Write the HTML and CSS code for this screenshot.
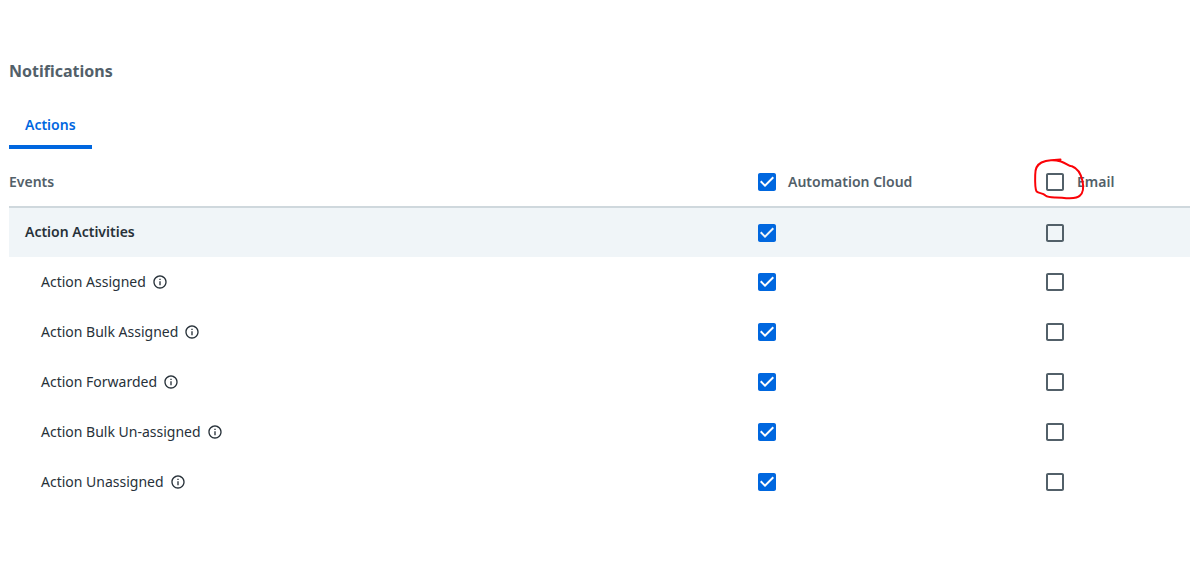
FILE: index.html
```html
<!DOCTYPE html>
<html lang="en">
<head>
    <meta charset="UTF-8">
    <meta name="viewport" content="width=device-width, initial-scale=1.0">
    <title>Notifications</title>
    <link rel="stylesheet" href="styles.css">
</head>
<body>
    <svg class="sprite">
        <symbol id="checked" viewBox="0 0 24 24">
            <path d="M19 3H5c-1.11 0-2 .9-2 2v14c0 1.1.89 2 2 2h14c1.11 0 2-.9 2-2V5c0-1.1-.89-2-2-2zm-9 14l-5-5 1.41-1.41L10 14.17l7.59-7.59L19 8l-9 9z"/>
        </symbol>
        <symbol id="unchecked" viewBox="0 0 24 24">
            <path d="M19 5v14H5V5h14m0-2H5c-1.1 0-2 .9-2 2v14c0 1.1.9 2 2 2h14c1.1 0 2-.9 2-2V5c0-1.1-.9-2-2-2z"/>
        </symbol>
        <symbol id="info" viewBox="0 0 24 24">
            <path d="M11 7h2v2h-2zm0 4h2v6h-2zm1-9C6.48 2 2 6.48 2 12s4.48 10 10 10 10-4.48 10-10S17.52 2 12 2zm0 18c-4.41 0-8-3.59-8-8s3.59-8 8-8 8 3.59 8 8-3.59 8-8 8z"/>
        </symbol>
    </svg>

    <h1>Notifications</h1>
    <div class="tabs">
        <button type="button" class="tab">Actions</button>
    </div>

    <table>
        <colgroup>
            <col class="col-events">
            <col class="col-cloud">
            <col class="col-email">
        </colgroup>
        <thead>
            <tr>
                <th>Events</th>
                <th>
                    <div class="channel">
                        <svg class="box on"><use href="#checked"/></svg>
                        <span>Automation Cloud</span>
                    </div>
                </th>
                <th>
                    <div class="channel email">
                        <svg class="box"><use href="#unchecked"/></svg>
                        <span>Email</span>
                        <svg class="scribble" viewBox="0 0 60 50">
                            <path d="M30 6.200C25 4.700 17 4.600 11.500 7.500C7 9.800 5 14 5.200 20C5 27 5 34 6.600 36.500C9 38.700 12.500 37.500 15.500 40.500C19 43.500 25 41.800 32 42.700C39 43.500 47 44 50 40.500C54 37 53.500 31 52.500 26C51 19 47 13 42 11.200C38.500 11.500 37 8.500 31 6.500C28 5.300 24.500 5 21 5.300L30.500 4.600"/>
                        </svg>
                    </div>
                </th>
            </tr>
        </thead>
        <tbody>
            <tr class="group">
                <td>Action Activities</td>
                <td><svg class="box on"><use href="#checked"/></svg></td>
                <td><svg class="box"><use href="#unchecked"/></svg></td>
            </tr>
            <tr>
                <td><div class="event">Action Assigned <svg class="info"><use href="#info"/></svg></div></td>
                <td><svg class="box on"><use href="#checked"/></svg></td>
                <td><svg class="box"><use href="#unchecked"/></svg></td>
            </tr>
            <tr>
                <td><div class="event">Action Bulk Assigned <svg class="info"><use href="#info"/></svg></div></td>
                <td><svg class="box on"><use href="#checked"/></svg></td>
                <td><svg class="box"><use href="#unchecked"/></svg></td>
            </tr>
            <tr>
                <td><div class="event">Action Forwarded <svg class="info"><use href="#info"/></svg></div></td>
                <td><svg class="box on"><use href="#checked"/></svg></td>
                <td><svg class="box"><use href="#unchecked"/></svg></td>
            </tr>
            <tr>
                <td><div class="event">Action Bulk Un-assigned <svg class="info"><use href="#info"/></svg></div></td>
                <td><svg class="box on"><use href="#checked"/></svg></td>
                <td><svg class="box"><use href="#unchecked"/></svg></td>
            </tr>
            <tr>
                <td><div class="event">Action Unassigned <svg class="info"><use href="#info"/></svg></div></td>
                <td><svg class="box on"><use href="#checked"/></svg></td>
                <td><svg class="box"><use href="#unchecked"/></svg></td>
            </tr>
        </tbody>
    </table>
</body>
</html>
```
FILE: styles.css
```css
* {
    box-sizing: border-box;
}

body {
    margin: 0;
    padding: 59px 0 0 9px;
    background: #fff;
    color: #273139;
    font-family: "Noto Sans", sans-serif;
    font-size: 14px;
    line-height: 20px;
}

.sprite {
    display: none;
}

h1 {
    margin: 0;
    color: #526069;
    font-size: 16px;
    font-weight: 700;
    line-height: 24px;
}

.tabs {
    display: flex;
    margin-top: 18px;
}

.tab {
    height: 48px;
    padding: 4px 16px 0;
    border: none;
    border-bottom: 4px solid #0067df;
    background: none;
    color: #0067df;
    font: inherit;
    font-weight: 600;
}

table {
    width: 100%;
    margin-top: 8px;
    table-layout: fixed;
    border-collapse: separate;
    border-spacing: 0;
}

.col-events {
    width: 746px;
}

.col-cloud {
    width: 288px;
}

th, td {
    height: 50px;
    padding: 0;
    text-align: left;
    vertical-align: middle;
}

th {
    height: 51px;
    border-bottom: 2px solid #cfd8dd;
    color: #526069;
    font-weight: 600;
}

.group td {
    height: 49px;
    background: #f0f5f8;
}

.group td:first-child {
    padding: 0 0 2px 16px;
    font-weight: 600;
}

.channel {
    display: flex;
    align-items: center;
    gap: 9px;
    position: relative;
}

.email {
    gap: 10px;
}

.event {
    display: flex;
    align-items: center;
    gap: 6px;
    padding-left: 32px;
}

.box {
    display: block;
    width: 24px;
    height: 24px;
    fill: #526069;
}

.on {
    fill: #0067df;
}

.info {
    width: 16px;
    height: 16px;
    fill: #273139;
}

/* hand drawn circle over the email checkbox */
.scribble {
    position: absolute;
    left: -13px;
    top: -15px;
    width: 60px;
    height: 50px;
    fill: none;
    stroke: #fb0207;
    stroke-width: 2;
    stroke-linecap: round;
    stroke-linejoin: round;
}
```
